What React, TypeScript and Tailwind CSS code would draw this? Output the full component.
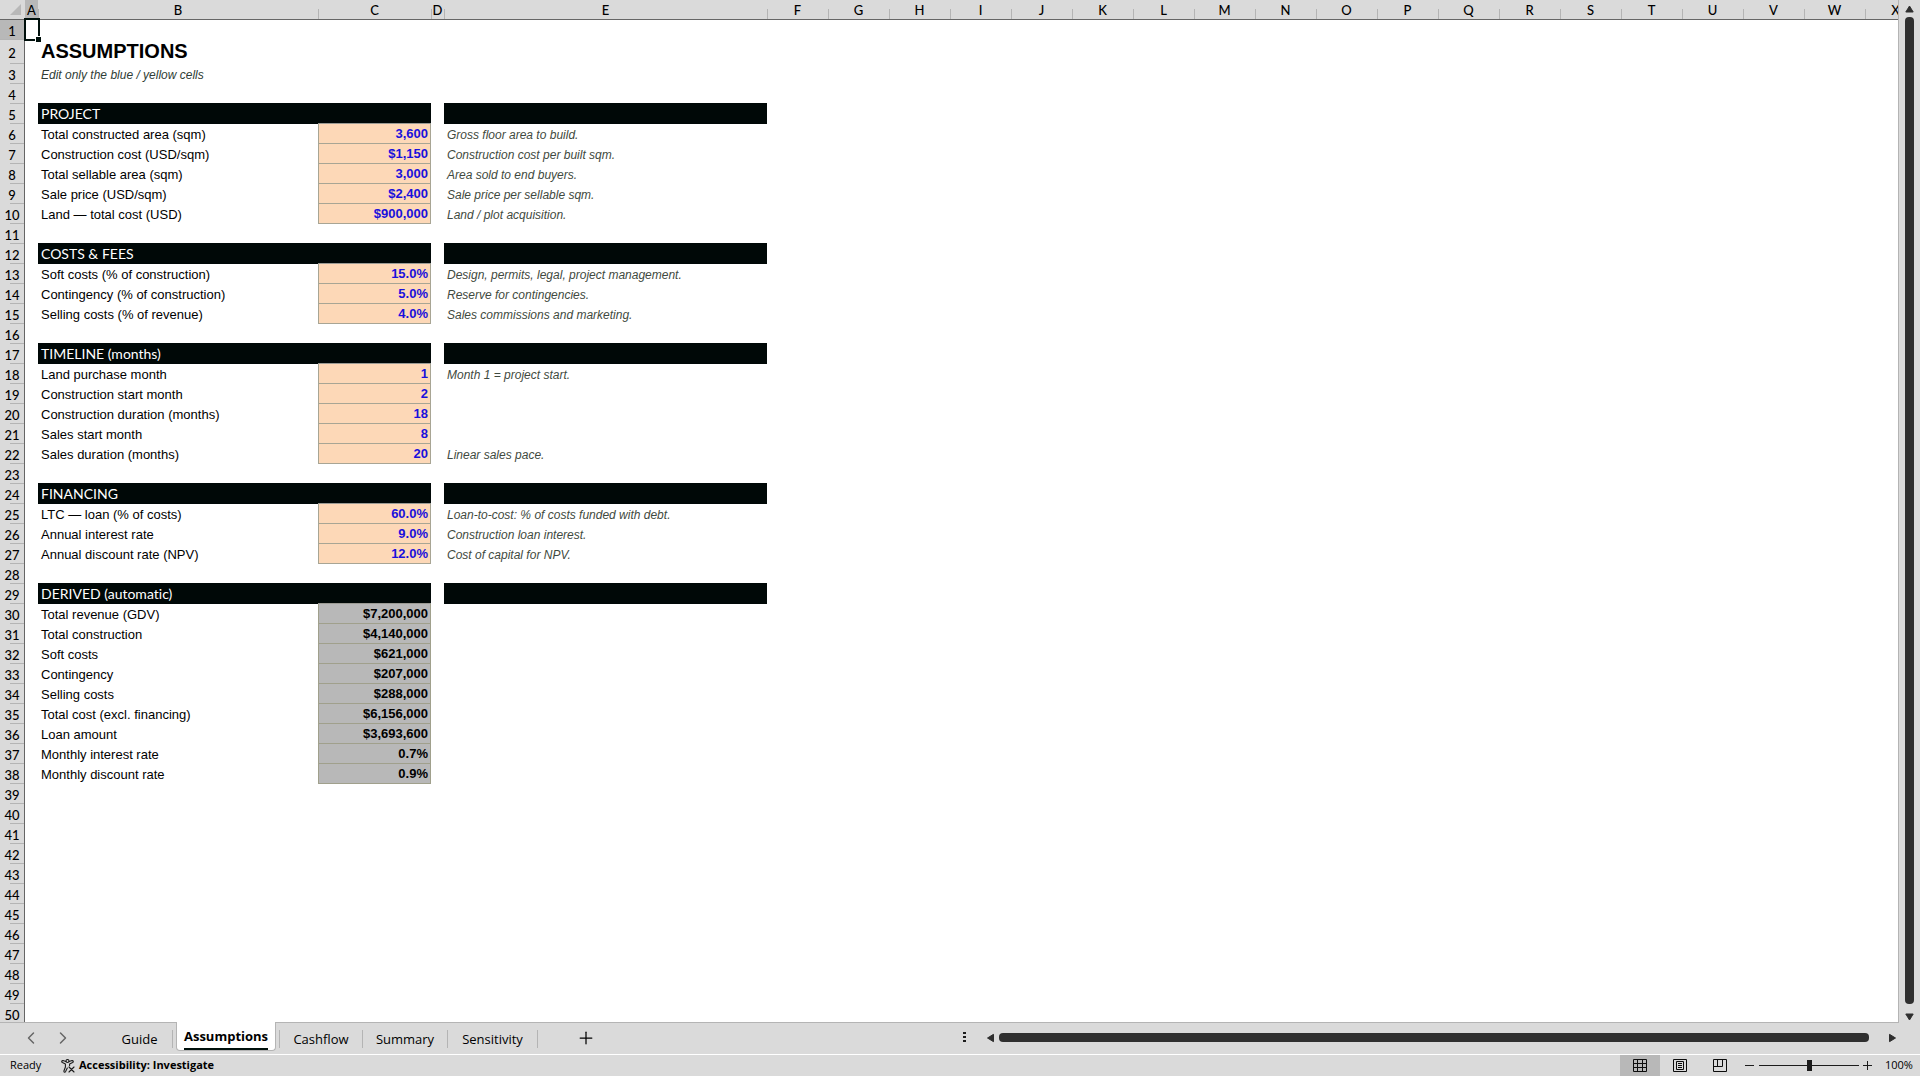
import { ChevronLeft, ChevronRight, Plus } from 'lucide-react'

type Row = {
  kind: 'title' | 'hint' | 'section' | 'input' | 'derived'
  label: string
  value?: string
  note?: string
}

const rows: Record<number, Row> = {
  2: { kind: 'title', label: 'ASSUMPTIONS' },
  3: { kind: 'hint', label: 'Edit only the blue / yellow cells' },
  5: { kind: 'section', label: 'PROJECT' },
  6: { kind: 'input', label: 'Total constructed area (sqm)', value: '3,600', note: 'Gross floor area to build.' },
  7: { kind: 'input', label: 'Construction cost (USD/sqm)', value: '$1,150', note: 'Construction cost per built sqm.' },
  8: { kind: 'input', label: 'Total sellable area (sqm)', value: '3,000', note: 'Area sold to end buyers.' },
  9: { kind: 'input', label: 'Sale price (USD/sqm)', value: '$2,400', note: 'Sale price per sellable sqm.' },
  10: { kind: 'input', label: 'Land — total cost (USD)', value: '$900,000', note: 'Land / plot acquisition.' },
  12: { kind: 'section', label: 'COSTS & FEES' },
  13: { kind: 'input', label: 'Soft costs (% of construction)', value: '15.0%', note: 'Design, permits, legal, project management.' },
  14: { kind: 'input', label: 'Contingency (% of construction)', value: '5.0%', note: 'Reserve for contingencies.' },
  15: { kind: 'input', label: 'Selling costs (% of revenue)', value: '4.0%', note: 'Sales commissions and marketing.' },
  17: { kind: 'section', label: 'TIMELINE (months)' },
  18: { kind: 'input', label: 'Land purchase month', value: '1', note: 'Month 1 = project start.' },
  19: { kind: 'input', label: 'Construction start month', value: '2' },
  20: { kind: 'input', label: 'Construction duration (months)', value: '18' },
  21: { kind: 'input', label: 'Sales start month', value: '8' },
  22: { kind: 'input', label: 'Sales duration (months)', value: '20', note: 'Linear sales pace.' },
  24: { kind: 'section', label: 'FINANCING' },
  25: { kind: 'input', label: 'LTC — loan (% of costs)', value: '60.0%', note: 'Loan-to-cost: % of costs funded with debt.' },
  26: { kind: 'input', label: 'Annual interest rate', value: '9.0%', note: 'Construction loan interest.' },
  27: { kind: 'input', label: 'Annual discount rate (NPV)', value: '12.0%', note: 'Cost of capital for NPV.' },
  29: { kind: 'section', label: 'DERIVED (automatic)' },
  30: { kind: 'derived', label: 'Total revenue (GDV)', value: '$7,200,000' },
  31: { kind: 'derived', label: 'Total construction', value: '$4,140,000' },
  32: { kind: 'derived', label: 'Soft costs', value: '$621,000' },
  33: { kind: 'derived', label: 'Contingency', value: '$207,000' },
  34: { kind: 'derived', label: 'Selling costs', value: '$288,000' },
  35: { kind: 'derived', label: 'Total cost (excl. financing)', value: '$6,156,000' },
  36: { kind: 'derived', label: 'Loan amount', value: '$3,693,600' },
  37: { kind: 'derived', label: 'Monthly interest rate', value: '0.7%' },
  38: { kind: 'derived', label: 'Monthly discount rate', value: '0.9%' },
}

const columns = 'ABCDEFGHIJKLMNOPQRSTUVWX'.split('')
const wideColumns: Record<string, string> = {
  A: 'w-[13px]',
  B: 'w-[280px]',
  C: 'w-[113px]',
  D: 'w-[13px]',
  E: 'w-[323px]',
}

const labelStyles = {
  title: 'text-[20px] leading-[22px] pb-0.5 font-bold',
  hint: 'text-xs leading-[18px] pt-0.5 italic text-[#2f3d36]',
  section: 'bg-[#000807] text-white text-sm leading-5 font-[Lato] [font-variant-ligatures:none]',
  input: 'text-[13px] leading-[18px] pt-0.5',
  derived: 'text-[13px] leading-[18px] pt-0.5',
}

function SheetRow({ n }: { n: number }) {
  const row = rows[n]
  const aboveBar = rows[n + 1]?.kind === 'section' ? 'border-b border-[#000807]' : ''
  const bar = row?.kind === 'section' ? 'bg-[#000807]' : ''

  let valueStyle = aboveBar
  if (row?.kind === 'section') valueStyle = 'bg-[#000807] border-b border-[#9b9b94]'
  if (row?.kind === 'input') valueStyle = 'bg-[#fdd8b7] text-[#1a10dc] border-x border-b border-[#a8a594]'
  if (row?.kind === 'derived') valueStyle = 'bg-[#b8b8b8] border-x border-b border-[#a0a08c]'

  return (
    <tr className={n === 2 ? 'h-6' : 'h-5'}>
      <th
        scope="row"
        className={`px-0 pt-0.5 pb-0 border-r border-[#666] font-[Lato] text-[13px] leading-[18px] font-medium bg-no-repeat bg-right-bottom bg-[linear-gradient(#b4b4b4,#b4b4b4)] ${
          n === 1 ? 'bg-[#b8b8b8] bg-[length:24px_1px]' : 'bg-[#dadada] bg-[length:14px_1px]'
        }`}
      >
        {n}
      </th>
      <td className="relative p-0">
        {n === 1 && (
          <div className="absolute -top-0.5 -left-px z-10 h-[23px] w-4 border-2 border-[#00100c]">
            <span className="absolute -right-[3px] -bottom-[3px] size-[6px] border-t border-l border-white bg-[#00100c]" />
          </div>
        )}
      </td>
      <td className={`pr-0 pl-[3px] ${row ? labelStyles[row.kind] : ''} ${aboveBar}`}>{row?.label}</td>
      <td className={`py-0 pl-0 pr-[2px] text-right text-[13px] leading-[19px] font-bold ${valueStyle}`}>{row?.value}</td>
      <td className="p-0" />
      <td className={`pt-0.5 pb-0 pr-0 pl-[3px] text-xs leading-[17px] italic text-[#3f4a40] ${bar} ${aboveBar}`}>{row?.note}</td>
      <td colSpan={19} className="p-0" />
    </tr>
  )
}

function Sheet() {
  return (
    <div className="min-w-0 flex-1 overflow-hidden border-r border-b border-[#b4b4b4] bg-white">
      <table className="w-max table-fixed border-separate border-spacing-0">
        <colgroup>
          <col className="w-[25px]" />
          {columns.map((c) => (
            <col key={c} className={wideColumns[c] ?? 'w-[61px]'} />
          ))}
        </colgroup>
        <thead>
          <tr className="h-5 bg-[#dadada]">
            <td className="w-[25px] border-b border-[#666] p-0">
              <svg className="ml-2.5 size-[11px]" viewBox="0 0 11 11" aria-hidden="true">
                <path d="M11 0V11H0Z" fill="#b8b8b8" />
              </svg>
            </td>
            {columns.map((c) => (
              <th
                key={c}
                scope="col"
                className={`${wideColumns[c] ?? 'w-[61px]'} border-b border-[#666] px-0 pt-0.5 pb-0 font-[Lato] text-[13px] leading-[17px] font-medium ${
                  c === 'A'
                    ? 'bg-[#b8b8b8]'
                    : 'bg-[linear-gradient(#b4b4b4,#b4b4b4)] bg-[length:1px_10px] bg-left-bottom bg-no-repeat'
                }`}
              >
                {c}
              </th>
            ))}
          </tr>
        </thead>
        <tbody>
          {Array.from({ length: 50 }, (_, i) => (
            <SheetRow key={i} n={i + 1} />
          ))}
        </tbody>
      </table>
    </div>
  )
}

function Arrow({ className }: { className: string }) {
  return (
    <svg className={`block h-2 w-[9px] ${className}`} viewBox="0 0 9 8" aria-hidden="true">
      <path d="M4.5 1 8.2 7H.8Z" fill="#2f2f2f" stroke="#2f2f2f" strokeLinejoin="round" />
    </svg>
  )
}

function VerticalScroll() {
  return (
    <div className="flex w-[21px] flex-col items-center pt-[5px] pb-0.5">
      <button aria-label="Scroll up"><Arrow className="" /></button>
      <div className="mt-1 mb-[9px] w-[9px] flex-1 rounded-[4px] bg-[#2f2f2f]" />
      <button aria-label="Scroll down"><Arrow className="rotate-180" /></button>
    </div>
  )
}

const tabStyle = 'border-r border-[#b4b4b4] h-[18px] mt-[7px] flex items-center justify-center text-[13px] leading-[18px]'

function TabBar() {
  return (
    <div className="flex h-[31px] items-start bg-[#dadada]">
      <div className="flex w-[107px] items-center gap-3 pt-[5px] pl-[21px]">
        <button aria-label="Previous sheet"><ChevronLeft className="size-5 text-[#666]" strokeWidth={1.75} /></button>
        <button aria-label="Next sheet"><ChevronRight className="size-5 text-[#666]" strokeWidth={1.75} /></button>
      </div>
      <nav className="flex items-start" aria-label="Sheets">
        <button className={`${tabStyle} w-[66px]`}>Guide</button>
        <button className="-mt-px ml-[3px] flex h-[29px] w-[100px] justify-center rounded-b-[4px] border-x border-b border-[#b4b4b4] bg-white pt-[5px]">
          <span className="border-b-2 border-[#00100c] text-[13px] leading-[18px] font-bold">Assumptions</span>
        </button>
        <span className={`${tabStyle} w-1`} />
        <button className={`${tabStyle} w-[83px]`}>Cashflow</button>
        <button className={`${tabStyle} w-[85px]`}>Summary</button>
        <button className={`${tabStyle} w-[90px]`}>Sensitivity</button>
      </nav>
      <button className="mt-[5px] ml-[38px]" aria-label="New sheet"><Plus className="size-5" strokeWidth={1.5} /></button>
      <div className="ml-auto flex w-[50%] items-center gap-1 pt-[9px] pr-[23px] pl-[3px]">
        <svg className="mr-4 h-[11px] w-[3px]" viewBox="0 0 3 11" aria-hidden="true">
          <path d="M0 0h3v2H0zM0 4h3v2H0zM0 8h3v2H0z" fill="#1c1c1c" />
        </svg>
        <button aria-label="Scroll left"><Arrow className="-rotate-90" /></button>
        <div className="mr-[15px] h-[9px] flex-1 rounded-[4px] bg-[#2f2f2f]" />
        <button aria-label="Scroll right"><Arrow className="rotate-90" /></button>
      </div>
    </div>
  )
}

function StatusBar() {
  return (
    <div className="flex h-[22px] items-stretch border-t border-white bg-[#dadada] text-[11px]">
      <span className="flex w-[51px] items-center pl-2.5">Ready</span>
      <button className="flex items-center gap-1 pl-2.5 font-bold">
        <svg className="size-[14px]" viewBox="0 0 14 14" fill="none" stroke="#1c1c1c" strokeWidth="1.1" strokeLinecap="round" strokeLinejoin="round" aria-hidden="true">
          <circle cx="6.5" cy="2" r="1.5" />
          <path d="M4.9 2.6 2 1.6C.6 1.4.3 3 1.4 3.6L4.4 5v3L2.9 12c-.1 1.3 1.2 1.6 1.7.6L6.3 9M8.1 2.6 11 1.6c1.4-.2 1.7 1.4.6 2L8.6 5v1.6M8 8l5 5M13 8l-5 5" />
        </svg>
        Accessibility: Investigate
      </button>
      <div className="ml-auto flex items-stretch">
        <button className="flex w-10 items-center justify-center bg-[#b8b8b8]" aria-label="Normal view">
          <svg className="size-[14px]" viewBox="0 0 14 14" fill="none" stroke="#0c0c0c" aria-hidden="true">
            <path d="M.5.5h13v12H.5ZM.5 4.5h13M.5 8.5h13M4.5.5v12M9.5.5v12" />
          </svg>
        </button>
        <button className="flex w-10 items-center justify-center" aria-label="Page layout view">
          <svg className="size-[14px]" viewBox="0 0 14 14" fill="none" stroke="#0c0c0c" aria-hidden="true">
            <path d="M.5.5h13v12H.5ZM3.5 2.5h7v8h-7ZM5 4.5h4M5 6.5h4M5 8.5h4" />
          </svg>
        </button>
        <button className="flex w-10 items-center justify-center" aria-label="Page break preview">
          <svg className="size-[14px]" viewBox="0 0 14 14" fill="none" stroke="#0c0c0c" aria-hidden="true">
            <path d="M.5.5h13v12H.5ZM4.5.5v7M9.5.5v7M.5 7.5h9" />
          </svg>
        </button>
        <button className="ml-[5px] flex w-3 items-center" aria-label="Zoom out">
          <svg className="size-[9px]" viewBox="0 0 9 9" stroke="#1c1c1c" aria-hidden="true"><path d="M0 4.5h9" /></svg>
        </button>
        <input
          type="range"
          min={0}
          max={100}
          defaultValue={50}
          aria-label="Zoom"
          className="mx-0.5 my-auto h-3 w-[100px] appearance-none bg-[linear-gradient(#1c1c1c,#1c1c1c)] bg-[length:100%_1px] bg-center bg-no-repeat [&::-webkit-slider-thumb]:h-[11px] [&::-webkit-slider-thumb]:w-[5px] [&::-webkit-slider-thumb]:appearance-none [&::-webkit-slider-thumb]:bg-[#1c1c1c]"
        />
        <button className="ml-0.5 flex w-[22px] items-center" aria-label="Zoom in">
          <svg className="size-[9px]" viewBox="0 0 9 9" stroke="#1c1c1c" aria-hidden="true"><path d="M0 4.5h9M4.5 0v9" /></svg>
        </button>
        <button className="w-[35px] text-left">100%</button>
      </div>
    </div>
  )
}

export default function App() {
  return (
    <div className="flex h-screen flex-col overflow-hidden bg-[#dadada] font-['Liberation_Sans',sans-serif] text-black">
      <main className="flex min-h-0 flex-1">
        <Sheet />
        <VerticalScroll />
      </main>
      <footer className="font-['Open_Sans',sans-serif]">
        <TabBar />
        <StatusBar />
      </footer>
    </div>
  )
}
